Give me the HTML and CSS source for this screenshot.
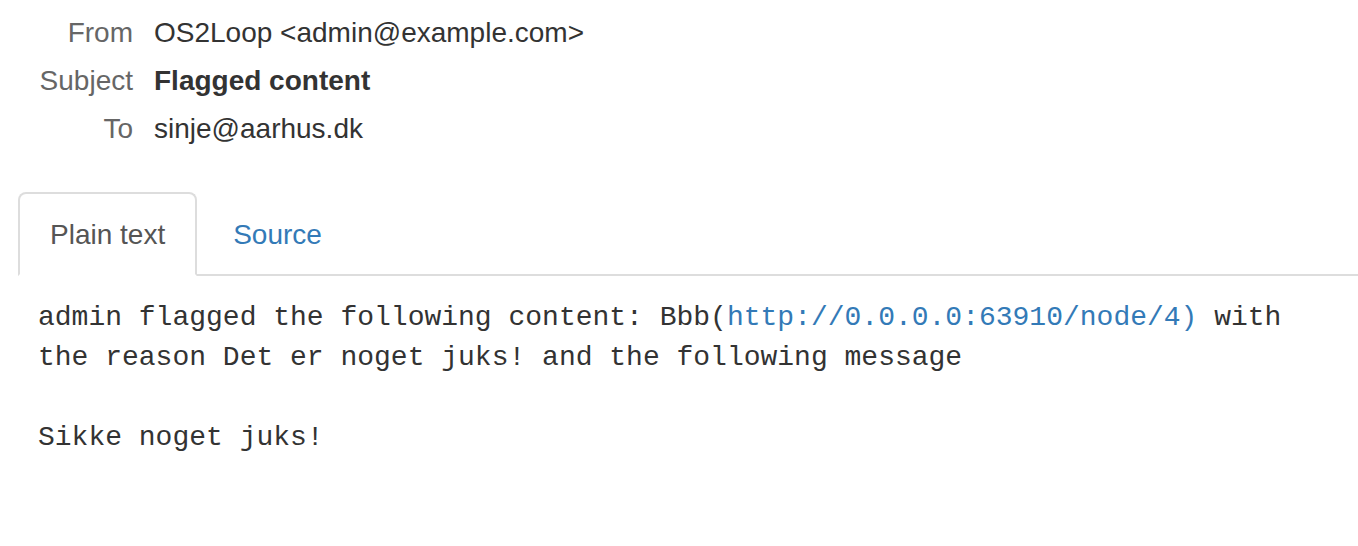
FILE: index.html
```html
<!DOCTYPE html>
<html>
<head>
<meta charset="utf-8">
<link rel="stylesheet" href="styles.css">
</head>
<body>
<div class="headers">
  <div class="label">From</div><div class="value">OS2Loop &lt;admin@example.com&gt;</div>
  <div class="label">Subject</div><div class="value subject">Flagged content</div>
  <div class="label">To</div><div class="value">sinje@aarhus.dk</div>
</div>
<div class="tabs-wrap">
  <ul class="tabs">
    <li class="tab active"><span>Plain text</span></li>
    <li class="tab"><a href="#">Source</a></li>
  </ul>
  <div class="content">
    <pre class="plain">admin flagged the following content: Bbb(<a href="#">http://0.0.0.0:63910/node/4)</a> with
the reason Det er noget juks! and the following message

Sikke noget juks!</pre>
  </div>
</div>
</body>
</html>
```
FILE: styles.css
```css
html, body {
  margin: 0;
  padding: 0;
  background: #fff;
}
body {
  font-family: "Liberation Sans", Arial, Helvetica, sans-serif;
  color: #333;
}
.headers {
  display: grid;
  grid-template-columns: 133px 1fr;
  column-gap: 21px;
  padding-top: 9px;
  font-size: 28px;
}
.headers .label,
.headers .value {
  height: 48px;
  line-height: 48px;
}
.headers .label {
  text-align: right;
  color: #666;
}
.headers .value {
  color: #333;
}
.headers .subject {
  font-weight: bold;
}
.tabs-wrap {
  margin-top: 39px;
  padding-left: 18px;
}
.tabs {
  list-style: none;
  margin: 0;
  padding: 0;
  display: flex;
  border-bottom: 2px solid #ddd;
  font-size: 28px;
}
.tab {
  margin-right: 4px;
  margin-bottom: -2px;
  padding: 21px 30px 19px;
  line-height: 40px;
  border: 2px solid transparent;
  border-radius: 8px 8px 0 0;
}
.tab.active {
  border-color: #ddd;
  border-bottom-color: #fff;
  background: #fff;
  color: #555;
}
.tab a {
  color: #337ab7;
  text-decoration: none;
}
.content {
  padding: 22px 20px 0 20px;
}
.plain {
  margin: 0;
  font-family: "Liberation Mono", "Courier New", monospace;
  font-size: 28px;
  line-height: 40px;
  color: #333;
  white-space: pre-wrap;
}
.plain a {
  color: #337ab7;
  text-decoration: none;
}
```
